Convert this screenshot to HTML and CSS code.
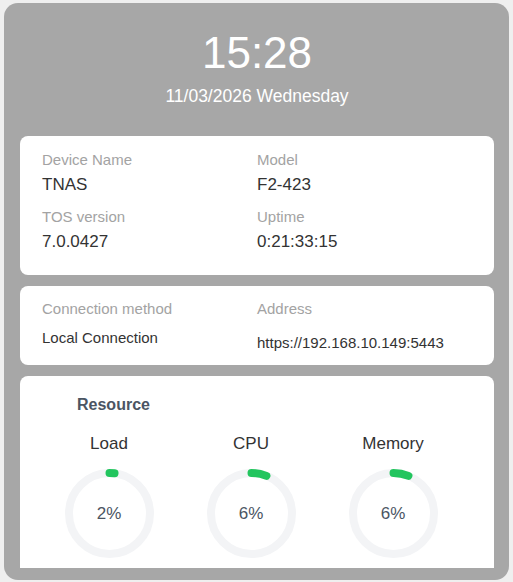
FILE: index.html
```html
<!DOCTYPE html>
<html lang="en">
<head>
<meta charset="utf-8">
<title>TNAS</title>
<link rel="stylesheet" href="styles.css">
</head>
<body>
<div class="page">
  <div class="panel">
    <div class="scroll">
      <header class="clock">
        <div class="time">15:28</div>
        <div class="date">11/03/2026 Wednesday</div>
      </header>

      <section class="card info">
        <div class="grid">
          <div class="item">
            <div class="label">Device Name</div>
            <div class="value">TNAS</div>
          </div>
          <div class="item">
            <div class="label">Model</div>
            <div class="value">F2-423</div>
          </div>
          <div class="item">
            <div class="label">TOS version</div>
            <div class="value">7.0.0427</div>
          </div>
          <div class="item">
            <div class="label">Uptime</div>
            <div class="value">0:21:33:15</div>
          </div>
        </div>
      </section>

      <section class="card conn">
        <div class="grid">
          <div class="item">
            <div class="label">Connection method</div>
            <div class="value small">Local Connection</div>
          </div>
          <div class="item">
            <div class="label">Address</div>
            <div class="value small addr">https://192.168.10.149:5443</div>
          </div>
        </div>
      </section>

      <section class="card resource">
        <h2 class="res-title">Resource</h2>
        <div class="gauges">
          <div class="gauge">
            <div class="g-label">Load</div>
            <div class="ring">
              <svg width="89" height="89" viewBox="0 0 89 89">
                <circle class="track" cx="44.5" cy="44.5" r="40.5"/>
                <circle class="bar" cx="44.5" cy="44.5" r="40.5" style="stroke-dasharray: 5.09 254.47"/>
              </svg>
              <span class="pct">2%</span>
            </div>
          </div>
          <div class="gauge">
            <div class="g-label">CPU</div>
            <div class="ring">
              <svg width="89" height="89" viewBox="0 0 89 89">
                <circle class="track" cx="44.5" cy="44.5" r="40.5"/>
                <circle class="bar" cx="44.5" cy="44.5" r="40.5" style="stroke-dasharray: 15.27 254.47"/>
              </svg>
              <span class="pct">6%</span>
            </div>
          </div>
          <div class="gauge">
            <div class="g-label">Memory</div>
            <div class="ring">
              <svg width="89" height="89" viewBox="0 0 89 89">
                <circle class="track" cx="44.5" cy="44.5" r="40.5"/>
                <circle class="bar" cx="44.5" cy="44.5" r="40.5" style="stroke-dasharray: 15.27 254.47"/>
              </svg>
              <span class="pct">6%</span>
            </div>
          </div>
        </div>
      </section>
    </div>
  </div>
</div>
</body>
</html>
```

FILE: styles.css
```css
* { box-sizing: border-box; }

html, body {
  margin: 0;
  padding: 0;
  background: #efefef;
  font-family: "Liberation Sans", Arial, sans-serif;
}

.page {
  padding: 3px 4px 2px 4px;
}

.panel {
  background: #a7a7a7;
  border-radius: 14px;
  height: 577px;
  padding: 0 15px 12px 16px;
  display: flex;
  flex-direction: column;
}

.scroll {
  flex: 1;
  overflow: hidden;
  display: flex;
  flex-direction: column;
  gap: 11px;
}

.clock {
  padding-top: 25px;
  padding-bottom: 18px;
  text-align: center;
  color: #ffffff;
}

.time {
  font-size: 44px;
  line-height: 50px;
}

.date {
  margin-top: 7px;
  font-size: 17.5px;
  line-height: 22px;
}

.card {
  background: #ffffff;
  border-radius: 8px;
  flex-shrink: 0;
}

.grid {
  display: grid;
  grid-template-columns: 215px 1fr;
  row-gap: 11px;
}

.info {
  padding: 14px 22px 22px 22px;
}

.conn {
  padding: 13px 22px 11px 22px;
}

.label {
  font-size: 15px;
  line-height: 20px;
  color: #a3a3a3;
}

.value {
  margin-top: 4px;
  font-size: 17px;
  line-height: 22px;
  color: #333333;
}

.value.small {
  font-size: 15px;
  margin-top: 8px;
}

.value.addr {
  margin-top: 13px;
}

.resource {
  padding: 18px 0 30px 18px;
}

.res-title {
  margin: 0 0 0 39px;
  font-size: 16px;
  line-height: 22px;
  font-weight: bold;
  color: #4b5563;
}

.gauges {
  margin-top: 17px;
  display: grid;
  grid-template-columns: repeat(3, 142px);
}

.gauge {
  display: flex;
  flex-direction: column;
  align-items: center;
}

.g-label {
  font-size: 17px;
  line-height: 22px;
  color: #333333;
}

.ring {
  margin-top: 14px;
  display: grid;
  place-items: center;
  width: 89px;
  height: 89px;
}

.ring svg,
.ring .pct {
  grid-area: 1 / 1;
}

.ring svg {
  display: block;
  transform: rotate(-90deg);
}

.track {
  fill: none;
  stroke: #f3f4f6;
  stroke-width: 8;
}

.bar {
  fill: none;
  stroke: #22c55e;
  stroke-width: 8;
  stroke-linecap: round;
}

.pct {
  font-size: 17px;
  line-height: 22px;
  color: #4b5563;
}
```
